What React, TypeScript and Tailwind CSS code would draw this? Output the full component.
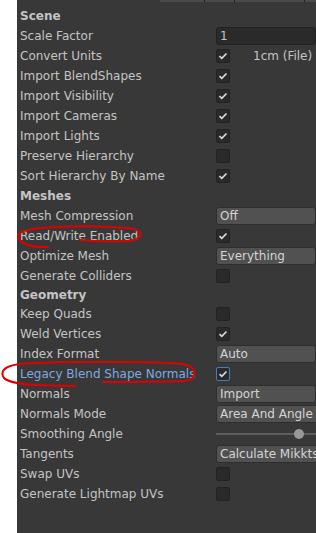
import React from "react";

type Row =
  | { kind: "header"; label: string; h?: string }
  | { kind: "check"; label: string; on: boolean; blue?: boolean; extra?: string }
  | { kind: "field"; label: string; value: string }
  | { kind: "select"; label: string; value: string }
  | { kind: "slider"; label: string };

const rows: Row[] = [
  { kind: "header", label: "Scene" },
  { kind: "field", label: "Scale Factor", value: "1" },
  { kind: "check", label: "Convert Units", on: true, extra: "1cm (File) to 0.01m (Unity)" },
  { kind: "check", label: "Import BlendShapes", on: true },
  { kind: "check", label: "Import Visibility", on: true },
  { kind: "check", label: "Import Cameras", on: true },
  { kind: "check", label: "Import Lights", on: true },
  { kind: "check", label: "Preserve Hierarchy", on: false },
  { kind: "check", label: "Sort Hierarchy By Name", on: true },
  { kind: "header", label: "Meshes" },
  { kind: "select", label: "Mesh Compression", value: "Off" },
  { kind: "check", label: "Read/Write Enabled", on: true },
  { kind: "select", label: "Optimize Mesh", value: "Everything" },
  { kind: "check", label: "Generate Colliders", on: false },
  { kind: "header", label: "Geometry", h: "h-[18px]" },
  { kind: "check", label: "Keep Quads", on: false },
  { kind: "check", label: "Weld Vertices", on: true },
  { kind: "select", label: "Index Format", value: "Auto" },
  { kind: "check", label: "Legacy Blend Shape Normals", on: true, blue: true },
  { kind: "select", label: "Normals", value: "Import" },
  { kind: "select", label: "Normals Mode", value: "Area And Angle Weighted" },
  { kind: "slider", label: "Smoothing Angle" },
  { kind: "select", label: "Tangents", value: "Calculate Mikktspace" },
  { kind: "check", label: "Swap UVs", on: false },
  { kind: "check", label: "Generate Lightmap UVs", on: false },
];

function Check({ on, blue }: { on: boolean; blue?: boolean }) {
  return (
    <div
      className={`w-[14px] h-[14px] rounded-[2px] bg-[#2a2a2a] border flex items-center justify-center ${
        blue ? "border-[#3f7fc4]" : "border-[#222222]"
      }`}
    >
      {on && (
        <svg width="10" height="8" viewBox="0 0 10 8">
          <path d="M1.5 4.2 L3.8 6.3 L8.5 1.5" fill="none" stroke="#dcdcdc" strokeWidth="1.6" />
        </svg>
      )}
    </div>
  );
}

function Control({ row }: { row: Row }) {
  if (row.kind === "check")
    return (
      <div className="flex items-center">
        <Check on={row.on} blue={row.blue} />
        {row.extra && <span className="ml-[23px] whitespace-nowrap">{row.extra}</span>}
      </div>
    );
  if (row.kind === "field")
    return (
      <div className="h-[18px] w-[140px] rounded-[3px] bg-[#2a2a2a] border border-[#212121] pl-[3px] flex items-center">
        {row.value}
      </div>
    );
  if (row.kind === "select")
    return (
      <div className="h-[18px] w-[140px] rounded-[3px] bg-[#515151] border border-[#2e2e2e] pl-[3px] flex items-center whitespace-nowrap text-[#d4d4d4]">
        {row.value}
      </div>
    );
  if (row.kind === "slider")
    return (
      <div className="relative h-[18px] w-[140px] flex items-center">
        <div className="h-[2px] w-full bg-[#5e5e5e]" />
        <div className="absolute left-[78px] w-[10px] h-[10px] rounded-full bg-[#999999]" />
      </div>
    );
  return null;
}

export default function App() {
  return (
    <div className="w-[316px] h-[533px] flex bg-white" style={{ fontFamily: '"DejaVu Sans", sans-serif' }}>
      <div className="w-[17px]" />
      <div className="relative flex-1 bg-[#383838] overflow-hidden text-[12px] text-[#c4c4c4]">
        {/* tab strip */}
        <div className="flex h-[2px] ml-[143px]">
          <div className="w-[45px] bg-[#4b4b4b] border-r border-[#222]" />
          <div className="w-[30px] bg-[#4b4b4b] border-r border-[#222]" />
          <div className="w-[70px] bg-[#4b4b4b] border-r border-[#222]" />
          <div className="flex-1 bg-[#4b4b4b]" />
        </div>
        <div className="pt-[4px] pl-[3px]">
          {rows.map((r, i) => (
            <div key={i} className={`flex items-center ${r.kind === "header" && r.h ? r.h : "h-[20px]"}`}>
              <div
                className={`w-[196px] shrink-0 whitespace-nowrap ${r.kind === "header" ? "font-bold" : ""} ${
                  r.kind === "check" && r.blue ? "text-[#7fa8e0]" : ""
                }`}
              >
                {r.label}
              </div>
              <Control row={r} />
            </div>
          ))}
        </div>
      </div>
      {/* hand drawn marks */}
      <svg className="absolute left-0 top-0 pointer-events-none" width="316" height="533">
        <path
          d="M48 247 C26 248 14 240 20 233 C28 226 90 225 128 228 C146 230 144 240 126 241 C110 242 92 241 80 240"
          fill="none"
          stroke="#e00000"
          strokeWidth="2"
          strokeLinecap="round"
        />
        <path
          d="M75 386 C40 386 10 385 4 378 C0 372 3 366 20 364 C60 361 150 361 183 364 C198 367 198 380 185 381 C160 382 130 382 103 382"
          fill="none"
          stroke="#e00000"
          strokeWidth="2"
          strokeLinecap="round"
        />
      </svg>
    </div>
  );
}
